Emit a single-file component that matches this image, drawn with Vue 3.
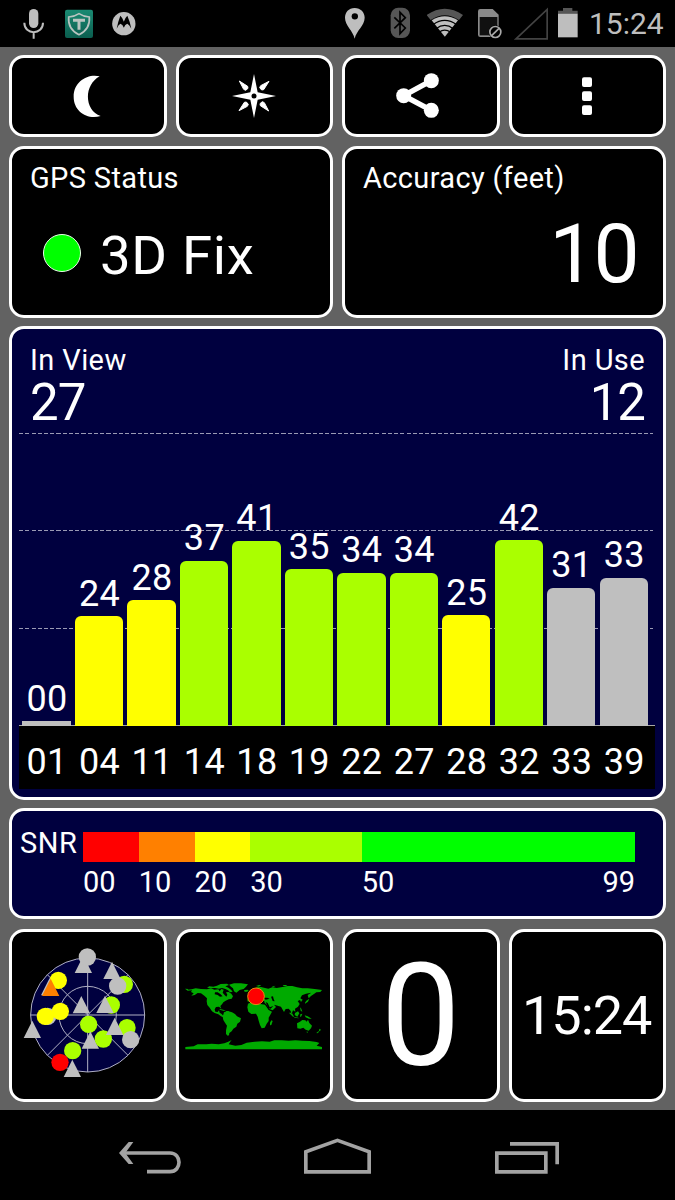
<template>
  <div class="screen">
    <!-- Status bar -->
    <header class="status-bar">
      <svg class="mic" viewBox="69 0 63 141">
        <rect x="87" y="27" width="28" height="57" rx="14" fill="#bebebe" />
        <path d="M73 68c0 38 56 38 56 0M101 96v20" fill="none" stroke="#bebebe" stroke-width="6" />
      </svg>
      <svg class="shield" viewBox="195 0 84 141">
        <defs>
          <linearGradient id="shieldBg" x1="0" y1="0" x2="0" y2="1">
            <stop offset="0" stop-color="#1a8a72" />
            <stop offset="1" stop-color="#0b5e4f" />
          </linearGradient>
        </defs>
        <rect x="195" y="29" width="84" height="85" rx="6" fill="url(#shieldBg)" />
        <path d="M237 41Q222 51 206 51Q203 88 237 104Q271 88 268 51Q252 51 237 41Z" fill="none" stroke="#b9c4c0" stroke-width="5" />
        <path d="M219 61h36M237 61v28" fill="none" stroke="#b9c4c0" stroke-width="9" />
      </svg>
      <svg class="moto" viewBox="336 0 72 141">
        <circle cx="371.500" cy="71" r="35" fill="#bebebe" />
        <path d="M350 86Q355 62 361 47Q367 52 371.500 65Q376 52 382 47Q389 62 394 86Q388 74 382 71Q375 73 371.500 83Q368 73 361 71Q355 74 350 86Z" fill="#000" />
      </svg>
      <span class="spacer"></span>
      <svg class="pin" viewBox="30 0 60 141">
        <path d="M59 24C41 24 30 37 30 53C30 76 54 92 59 116C64 92 89 76 89 53C89 37 77 24 59 24Z" fill="#bebebe" />
        <circle cx="59.500" cy="49" r="9.500" fill="#000" />
      </svg>
      <svg class="bluetooth" viewBox="165 0 63 141">
        <rect x="167" y="23" width="58" height="91" rx="23" fill="#565656" />
        <path d="M178 52L211 84L195 101V37L211 53L178 85" fill="none" stroke="#000" stroke-width="5" />
      </svg>
      <svg class="wifi" viewBox="276 0 108 141">
        <path d="M275 45Q329 7 384 45L372 60Q329 32 287 60Z" fill="#565656" />
        <path d="M290 61Q329 36 369 61L329.500 110Z" fill="#bebebe" />
        <path d="M294 74Q329 48 365 74M303 86Q329 66 355 86M312 97Q329 84 347 97" fill="none" stroke="#000" stroke-width="4" />
      </svg>
      <svg class="sim" viewBox="429 0 72 141">
        <path d="M436 27H473L491 44V104Q491 111 484 111H436Q429 111 429 104V34Q429 27 436 27Z" fill="#8a8a8a" />
        <path d="M434 51H487V106H434Z" fill="#111" />
        <circle cx="481" cy="96" r="20" fill="#000" />
        <circle cx="481" cy="96" r="16.500" fill="none" stroke="#a8a8a8" stroke-width="5" />
        <path d="M470 107L492 85" stroke="#a8a8a8" stroke-width="5" />
      </svg>
      <svg class="signal" viewBox="537 0 102 141">
        <path d="M543 116.500L636.500 28V116.500Z" fill="none" stroke="#434343" stroke-width="5" />
      </svg>
      <svg class="battery" viewBox="669 0 60 141">
        <path d="M684 24H712V32H728V41H669V32H684Z" fill="#565656" />
        <path d="M669 41H728V112H669Z" fill="#bebebe" />
      </svg>
      <span class="clock">15:24</span>
    </header>

    <main class="board">
      <!-- Toolbar -->
      <div class="row toolbar">
        <button class="card tool">
          <svg viewBox="196 222 132 132">
            <path d="M297 229C262 220 219 244 219 290C219 334 259 360 300 348C251 332 248 256 297 229Z" fill="#fff" />
          </svg>
        </button>
        <button class="card tool">
          <svg viewBox="695 223 132 132">
            <path d="M761 223L772 278L827 289L772 300L761 355L750 300L695 289L750 278Z" fill="#fff" />
            <path
              v-for="angle in [0, 90, 180, 270]"
              :key="angle"
              d="M717 244L742 260L743 266L736 272L730 269Z"
              fill="#fff"
              stroke="#fff"
              stroke-width="3"
              :transform="`rotate(${angle} 761 289)`"
            />
            <circle cx="761" cy="289" r="7.500" fill="#000" />
          </svg>
        </button>
        <button class="card tool">
          <svg viewBox="183 221 147 137" class="share">
            <path d="M289 244L206 289L289 333" fill="none" stroke="#fff" stroke-width="16" />
            <circle cx="289" cy="244" r="22.500" fill="#fff" />
            <circle cx="206" cy="289" r="22.500" fill="#fff" />
            <circle cx="289" cy="333" r="22.500" fill="#fff" />
          </svg>
        </button>
        <button class="card tool">
          <svg viewBox="690 223 132 132">
            <rect v-for="y in [233, 275, 317]" :key="y" x="741" :y="y" width="30" height="29" rx="6" fill="#fff" />
          </svg>
        </button>
      </div>

      <!-- Fix and accuracy -->
      <div class="row summary">
        <section class="card info">
          <h2>GPS Status</h2>
          <div class="fix">
            <span class="dot"></span>
            <span>3D Fix</span>
          </div>
        </section>
        <section class="card info">
          <h2>Accuracy (feet)</h2>
          <div class="accuracy">10</div>
        </section>
      </div>

      <!-- Satellite chart -->
      <section class="card chart">
        <div class="chart-head">
          <div class="count">
            <span class="count-label">In View</span>
            <span class="count-value">27</span>
          </div>
          <div class="count right">
            <span class="count-label">In Use</span>
            <span class="count-value">12</span>
          </div>
        </div>
        <div class="plot">
          <div class="grid-lines">
            <i></i>
            <i></i>
            <i></i>
            <i class="axis"></i>
          </div>
          <div class="bars">
            <div v-for="sat in satellites" :key="sat.id" class="bar-col">
              <span class="snr">{{ sat.snr }}</span>
              <div
                class="bar"
                :class="[sat.level, { empty: sat.snr === '00' }]"
                :style="{ height: sat.height + 'px' }"
              ></div>
            </div>
          </div>
        </div>
        <div class="ids">
          <span v-for="sat in satellites" :key="sat.id">{{ sat.id }}</span>
        </div>
      </section>

      <!-- SNR legend -->
      <section class="card legend">
        <span class="legend-title">SNR</span>
        <div class="scale">
          <div v-for="step in scale" :key="step.from" class="step" :style="{ flexGrow: step.span }">
            <div class="swatch" :class="step.level"></div>
            <div class="ticks">
              <span>{{ step.from }}</span>
              <span v-if="step.to">{{ step.to }}</span>
            </div>
          </div>
        </div>
      </section>

      <!-- Bottom tiles -->
      <div class="row tiles">
        <section class="card tile">
          <svg class="sky" viewBox="-6 3 450 480">
            <circle cx="218" cy="240" r="171" fill="#00003f" />
            <g fill="none" stroke="#b0b0c4" stroke-width="3">
              <circle cx="218" cy="240" r="171" />
              <circle cx="218" cy="240" r="86" />
              <path d="M47 240H389M218 69V411M97 119L339 361M339 119L97 361" />
            </g>
            <template v-for="(m, i) in skyMarks" :key="i">
              <circle v-if="m.shape === 'dot'" :cx="m.x" :cy="m.y" r="26" :fill="m.color" />
              <path v-else :d="`M${m.x} ${m.y - 26}l26 52h-52z`" :fill="m.color" />
            </template>
          </svg>
        </section>
        <section class="card tile">
          <svg class="world" viewBox="15 2 444 270">
            <g fill="#0a0">
              <path d="M30 55L40 56L38 58L50 57L62 54L78 56L96 57L108 54L118 58L130 57L134 63L139 56L146 58L143 67L148 73L154 79L157 73L153 66L161 65L169 70L174 78L170 85L161 87L152 91L145 96L141 102L136 107L139 115L132 109L123 110L119 117L121 124L128 125L132 120L134 127L140 131L146 138L145 141L138 138L130 132L119 128L111 123L104 112L97 104L95 93L96 84L88 76L78 69L68 68L59 74L49 76L56 69L48 65L51 60L38 61Z" />
              <path d="M96 52L103 48L115 49L126 46L137 41L156 40L162 44L151 48L160 52L168 58L173 64L165 66L159 60L151 56L141 53L132 55L120 53L107 54Z" />
              <path d="M162 43L177 39L198 39L219 42L213 49L206 56L194 59L184 67L177 63L174 54L168 49Z" />
              <path d="M208 59l10-1 3 4-8 3-6-2zM134 116l11 2 8 4-8-1-11-3zM152 122l9 1 2 3-9-1z" />
              <path d="M147 126L158 122L171 126L180 131L186 138L198 144L195 154L187 160L184 169L175 175L170 183L163 188L162 195L158 196L153 191L153 180L156 166L150 157L145 149L143 139Z" />
              <path d="M217 93L218 84L226 83L223 75L229 71L239 66L232 63L236 56L246 51L258 50L270 53L280 55L292 51L305 53L323 50L338 47L352 47L366 51L382 54L398 54L412 55L425 57L441 59L436 65L424 66L418 70L408 77L401 84L398 74L409 67L393 70L381 75L376 84L383 88L378 95L375 89L368 92L374 101L369 109L360 115L361 124L354 120L351 128L356 138L350 133L347 122L341 115L332 116L327 125L323 118L318 109L308 106L297 103L303 110L293 120L283 116L275 103L270 99L265 91L260 97L253 88L242 82L235 88L227 95Z" />
              <path d="M219 100L229 96L241 96L252 100L270 103L281 119L291 124L286 133L281 142L281 152L275 160L269 172L260 174L255 164L251 151L248 139L243 130L229 131L220 124L217 111Z" />
              <path d="M289 150L293 152L289 164L285 165L285 157ZM345 126L358 139L354 139L343 129ZM360 128L369 123L373 129L367 139L359 134ZM358 140l12 2 1 2-13-2zM376 132l6-2-3 8-4 2zM375 111l4 4 3 9-5-3zM390 97l4-6 9-6-4 9-9 6zM389 135L398 138L410 145L402 145L392 141Z" />
              <path d="M366 159L375 154L382 149L391 150L395 154L399 148L403 158L411 166L408 174L401 181L392 178L385 172L376 175L367 174Z" />
              <path d="M394 184l5 0-2 4zM433 175l5 3-4 5-2-2zM430 183l3 1-6 5-3-1zM243 47l9-3 7 1-8 4zM290 49l11-3-5 5zM323 44l10 0 5 4-12-1z" />
              <path d="M31 230L56 228L68 222L94 222L110 220L131 222L148 219L158 215L166 211L170 208L165 216L161 222L181 226L199 224L215 217L239 214L261 213L284 214L298 210L320 210L341 211L361 210L382 211L403 212L425 215L433 218L425 226L441 230V237H31Z" />
            </g>
            <g fill="#000">
              <path d="M247 88l6-2 10 3 6 5-9 4-7-4zM265 82l12 0 7 3-12 3zM288 79l6-1 2 8 3 7-6-1zM272 95l6 3 6 13 11-4-8 8-7-1zM120 66l8 0 8 5 7 7-8 1-7-5-9-2zM242 61l6 4-3 7 13 0-2 3-17 0z" />
            </g>
            <circle cx="243" cy="78" r="25" fill="#f00" stroke="#e88a10" stroke-width="3" />
          </svg>
        </section>
        <section class="card tile speed">0</section>
        <section class="card tile time">15:24</section>
      </div>
    </main>

    <!-- Navigation bar -->
    <nav class="nav-bar">
      <svg class="back" viewBox="57 0 186 270">
        <path d="M68 129H210C246 129 246 185 210 185H141" fill="none" stroke="#a3a3a3" stroke-width="11" />
        <path d="M86 96H100L76 129L100 162H86L57 129Z" fill="#a3a3a3" />
      </svg>
      <svg class="home" viewBox="612 0 201 270">
        <path d="M617.500 185.500V125L712.500 91L807.500 125V185.500Z" fill="none" stroke="#a3a3a3" stroke-width="11" />
      </svg>
      <svg class="recents" viewBox="1185 0 192 270">
        <path d="M1190.500 129.500H1337.500V185.500H1190.500ZM1230 101.500H1371.500V163" fill="none" stroke="#a3a3a3" stroke-width="11" />
      </svg>
    </nav>
  </div>
</template>

<script setup>
import { ref } from 'vue'

const satellites = ref([
  { id: '01', snr: '00', height: 5, level: 'unused' },
  { id: '04', snr: '24', height: 110, level: 'fair' },
  { id: '11', snr: '28', height: 126, level: 'fair' },
  { id: '14', snr: '37', height: 165.5, level: 'good' },
  { id: '18', snr: '41', height: 185.5, level: 'good' },
  { id: '19', snr: '35', height: 157, level: 'good' },
  { id: '22', snr: '34', height: 153.5, level: 'good' },
  { id: '27', snr: '34', height: 153.5, level: 'good' },
  { id: '28', snr: '25', height: 111, level: 'fair' },
  { id: '32', snr: '42', height: 186, level: 'good' },
  { id: '33', snr: '31', height: 138.5, level: 'unused' },
  { id: '39', snr: '33', height: 148.5, level: 'unused' }
])

const scale = [
  { from: '00', span: 10, level: 'bad' },
  { from: '10', span: 10, level: 'poor' },
  { from: '20', span: 10, level: 'fair' },
  { from: '30', span: 20, level: 'good' },
  { from: '50', to: '99', span: 49, level: 'best' }
]

const GREY = '#bfbfbf'
const LIME = '#aaff00'

// Later marks are drawn over earlier ones
const skyMarks = [
  { shape: 'tri', x: 205, y: 88, color: GREY },
  { shape: 'dot', x: 217, y: 66, color: GREY },
  { shape: 'dot', x: 328, y: 148, color: LIME },
  { shape: 'tri', x: 291, y: 106, color: GREY },
  { shape: 'dot', x: 308, y: 153, color: GREY },
  { shape: 'dot', x: 130, y: 136, color: '#ff0' },
  { shape: 'tri', x: 104, y: 155, color: GREY },
  { shape: 'tri', x: 107, y: 157, color: '#ff8000' },
  { shape: 'dot', x: 289, y: 210, color: LIME },
  { shape: 'tri', x: 270, y: 208, color: GREY },
  { shape: 'tri', x: 199, y: 209, color: GREY },
  { shape: 'dot', x: 98, y: 244, color: GREY },
  { shape: 'dot', x: 136, y: 229, color: '#ff0' },
  { shape: 'dot', x: 91, y: 244, color: '#ff0' },
  { shape: 'tri', x: 52, y: 283, color: GREY },
  { shape: 'dot', x: 221, y: 268, color: LIME },
  { shape: 'tri', x: 226, y: 315, color: GREY },
  { shape: 'dot', x: 265, y: 312, color: LIME },
  { shape: 'dot', x: 336, y: 278, color: LIME },
  { shape: 'tri', x: 299, y: 274, color: GREY },
  { shape: 'dot', x: 347, y: 314, color: GREY },
  { shape: 'dot', x: 173, y: 347, color: LIME },
  { shape: 'dot', x: 135, y: 382, color: '#f00' },
  { shape: 'tri', x: 172, y: 400, color: GREY }
]
</script>

<style>
body {
  margin: 0;
  background: #000;
}
</style>

<style scoped>
.screen {
  width: 675px;
  height: 1200px;
  display: flex;
  flex-direction: column;
  background: #000;
  color: #fff;
  font-family: Roboto, 'Liberation Sans', sans-serif;
  line-height: 1;
  overflow: hidden;
}

.screen * {
  box-sizing: border-box;
}

svg {
  display: block;
  flex: none;
}

/* Status bar */
.status-bar {
  display: flex;
  height: 47px;
  padding: 0 12px 0 23px;
}

.status-bar svg {
  height: 47px;
}

.mic { width: 21px; }
.shield { width: 28px; margin-left: 21px; }
.moto { width: 24px; margin-left: 19px; }
.pin { width: 20px; }
.bluetooth { width: 21px; margin-left: 25px; }
.wifi { width: 36px; margin-left: 16px; }
.sim { width: 24px; margin-left: 15px; }
.signal { width: 34px; margin-left: 12px; }
.battery { width: 20px; margin-left: 10px; }

.spacer {
  flex: 1;
}

.clock {
  width: 74px;
  margin-left: 11px;
  padding-top: 9px;
  font-size: 30px;
  color: #bebebe;
}

/* Cards */
.board {
  height: 1063px;
  padding: 8px 9px;
  background: #626262;
}

.row {
  display: grid;
  grid-template-columns: repeat(4, 1fr);
  gap: 9px;
}

.card {
  border: 3px solid #fff;
  border-radius: 15px;
  background: #000;
}

.toolbar {
  height: 82px;
}

.tool {
  display: flex;
  align-items: center;
  justify-content: center;
  padding: 0;
}

.tool svg {
  width: 44px;
  height: 44px;
}

.tool .share {
  width: 49px;
  height: 45.67px;
}

.summary {
  grid-template-columns: repeat(2, 1fr);
  height: 172px;
  margin-top: 9px;
}

.info {
  padding: 15px 24px 0 18px;
}

.info h2 {
  margin: 0;
  font-size: 29px;
  font-weight: 400;
  letter-spacing: 0.35px;
}

.fix {
  display: flex;
  align-items: center;
  margin-top: 35px;
  padding-left: 13px;
  font-size: 54.5px;
  letter-spacing: 0.7px;
}

.dot {
  width: 38px;
  height: 38px;
  margin: -5px 19px 0 0;
  border: 1px solid #e8ffe8;
  border-radius: 50%;
  background: #0f0;
}

.accuracy {
  margin: 20px 1.5px 0 0;
  font-size: 82px;
  letter-spacing: -2px;
  text-align: right;
}

/* Chart */
.chart {
  height: 474px;
  margin-top: 8px;
  padding: 0 8px 0 7px;
  background: #00003f;
}

.chart-head {
  display: flex;
  justify-content: space-between;
  height: 104px;
  padding: 17px 10px 0 11px;
}

.count {
  display: flex;
  flex-direction: column;
}

.count.right {
  align-items: flex-end;
}

.count-label {
  font-size: 29px;
  letter-spacing: 0.4px;
}

.count-value {
  margin-top: 2px;
  font-size: 51px;
  letter-spacing: -1px;
}

/* Grid lines and bars share one cell */
.plot {
  display: grid;
  height: 293px;
}

.grid-lines,
.bars {
  grid-area: 1 / 1;
}

.grid-lines {
  display: flex;
  flex-direction: column;
  justify-content: space-between;
}

.grid-lines i {
  height: 1px;
  margin-right: 2px;
  background: repeating-linear-gradient(90deg, #9a9ab4 0 4px, transparent 4px 6.25px);
}

.grid-lines .axis {
  margin-right: 0;
  background: #a8a8a8;
}

.bars {
  display: flex;
  align-items: flex-end;
  gap: 4.2px;
  padding-left: 3.3px;
}

.bar-col {
  display: flex;
  flex-direction: column;
  align-items: center;
  width: 48.3px;
}

.snr {
  margin-bottom: 4.5px;
  padding-left: 1px;
  font-size: 36px;
  letter-spacing: 0.3px;
}

.bar {
  width: 100%;
  border-radius: 6px 6px 0 0;
}

.bar.empty {
  border-radius: 0;
}

.bar.unused { background: #bfbfbf; }
.bad { background: #f00; }
.poor { background: #ff8000; }
.fair { background: #ff0; }
.good { background: #af0; }
.best { background: #0f0; }

.ids {
  display: flex;
  gap: 4.2px;
  height: 63px;
  padding: 18px 0 0 3.3px;
  background: #000;
  font-size: 36px;
  letter-spacing: 0.3px;
}

.ids span {
  width: 48.3px;
  padding-left: 1px;
  text-align: center;
}

/* SNR legend */
.legend {
  display: flex;
  height: 111px;
  margin-top: 8px;
  padding: 21px 28px 0 8px;
  background: #00003f;
  font-size: 29px;
}

.legend-title {
  width: 63px;
  margin-top: -3px;
  letter-spacing: 0.5px;
}

.scale {
  display: flex;
  flex: 1;
}

.step {
  flex-basis: 0;
  min-width: 0;
}

.swatch {
  height: 30px;
}

.ticks {
  display: flex;
  justify-content: space-between;
  margin-top: 6px;
}

/* Bottom tiles */
.tiles {
  height: 173px;
  margin-top: 10px;
}

.tile {
  display: flex;
  align-items: center;
  justify-content: center;
}

.sky {
  width: 150px;
  height: 160px;
}

.world {
  width: 148px;
  height: 90px;
}

.speed {
  padding-top: 3px;
  font-size: 142px;
}

.time {
  padding-right: 1px;
  font-size: 54px;
  letter-spacing: -1px;
}

/* Navigation bar */
.nav-bar {
  display: flex;
  height: 90px;
  padding-left: 119px;
}

.nav-bar svg {
  height: 90px;
}

.back { width: 62px; }
.home { width: 67px; margin-left: 123px; }
.recents { width: 64px; margin-left: 124px; }
</style>
